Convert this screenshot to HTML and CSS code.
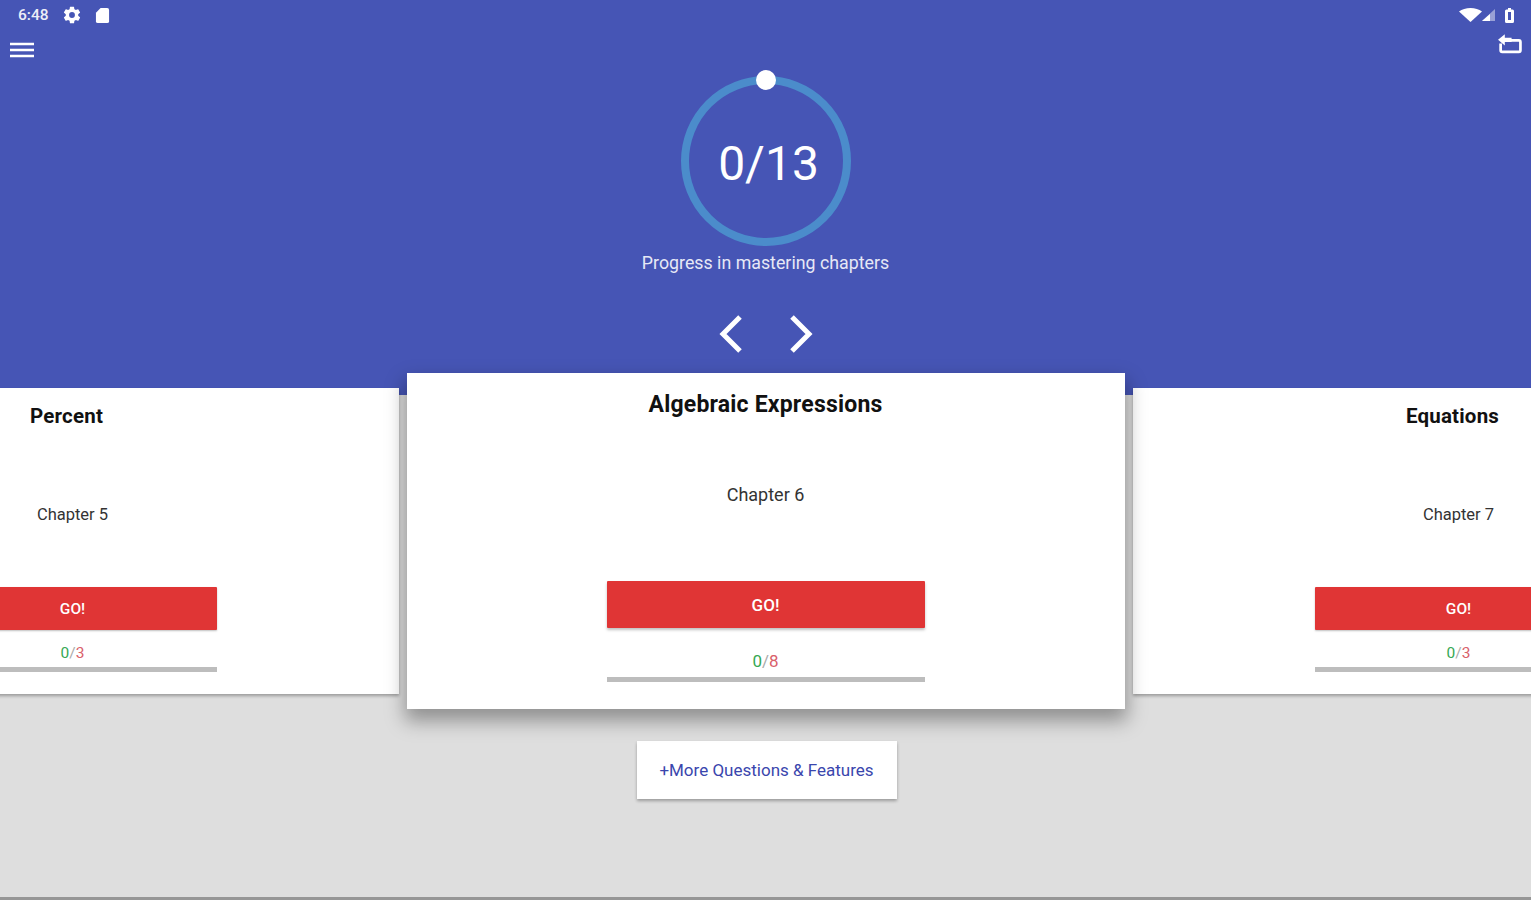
FILE: index.html
```html
<!DOCTYPE html>
<html lang="en">
<head>
<meta charset="UTF-8">
<title>Chapters</title>
<link rel="stylesheet" href="styles.css">
</head>
<body>

<header class="top">
    <div class="status-bar">
        <div class="status-left">
            <span class="clock">6:48</span>
            <svg viewBox="0 0 24 24" width="20" height="20"><path fill="#fff" d="M19.4 13c.04-.33.1-.66.1-1s-.06-.67-.1-1l2.1-1.65c.2-.15.25-.42.13-.64l-2-3.46c-.12-.22-.4-.3-.6-.22l-2.5 1c-.52-.4-1.08-.73-1.7-.98l-.37-2.65A.5.5 0 0 0 14 2h-4a.5.5 0 0 0-.5.42l-.37 2.65c-.62.25-1.18.58-1.7.98l-2.5-1c-.23-.08-.48 0-.6.22l-2 3.46c-.13.22-.07.49.13.64L4.56 11c-.04.33-.06.66-.06 1s.02.67.06 1l-2.1 1.65c-.2.15-.26.42-.13.64l2 3.46c.12.22.37.3.6.22l2.5-1c.52.4 1.08.73 1.7.98l.37 2.65c.04.24.25.42.5.42h4c.25 0 .46-.18.5-.42l.37-2.65c.62-.25 1.18-.58 1.7-.98l2.5 1c.22.08.48 0 .6-.22l2-3.46c.12-.22.07-.49-.13-.64L19.4 13zM12 15.5a3.5 3.5 0 1 1 0-7 3.5 3.5 0 0 1 0 7z"/></svg>
            <svg viewBox="0 0 16 18" width="15" height="17"><path fill="#fff" d="M6 1h7a2 2 0 0 1 2 2v12a2 2 0 0 1-2 2H3a2 2 0 0 1-2-2V6z"/></svg>
        </div>
        <div class="status-right">
            <svg viewBox="0 0 23 14" width="23" height="14"><path fill="#fff" d="M11.5 14 0 3.500C3 1.300 7 0 11.500 0S20 1.300 23 3.500z"/></svg>
            <svg viewBox="0 0 13 12" width="13" height="12"><path fill="#fff" opacity=".45" d="M13 0v12H0z"/><path fill="#fff" d="M8 5v7H0z"/></svg>
            <svg class="battery" viewBox="0 0 9 15" width="9" height="15"><path fill="#fff" fill-rule="evenodd" d="M3 0h3v1.500h1.500A1.500 1.500 0 0 1 9 3v10.500A1.500 1.500 0 0 1 7.500 15h-6A1.500 1.500 0 0 1 0 13.500V3a1.500 1.500 0 0 1 1.500-1.500H3zM3 4v8h3V4z"/></svg>
        </div>
    </div>
    <div class="toolbar">
        <svg class="menu-icon" viewBox="0 0 24 18" width="24" height="18"><path fill="none" stroke="#fff" stroke-width="2.400" d="M0 3h24M0 9h24M0 15h24"/></svg>
        <svg class="restore-icon" viewBox="0 0 24 20" width="25" height="21"><path fill="none" stroke="#fff" stroke-width="2.600" d="M6 7h15a1.500 1.500 0 0 1 1.500 1.500v8a1.500 1.500 0 0 1-1.500 1.500H5a1.500 1.500 0 0 1-1.500-1.500V10"/><path fill="#fff" d="M1 6.500 7.500 1v3.500H14v4H7.500V12z"/></svg>
    </div>
    <div class="progress">
        <div class="ring">
            <svg viewBox="0 0 170 170" width="170" height="170"><circle cx="85" cy="85" r="81" fill="none" stroke="#4b8ccb" stroke-width="8"/></svg>
            <span class="ring-dot"></span>
            <span class="ring-value">0/13</span>
        </div>
        <p class="progress-label">Progress in mastering chapters</p>
        <div class="arrows">
            <svg viewBox="0 0 26 38" width="26" height="38"><path fill="none" stroke="#fff" stroke-width="5" d="M22 2 5 19l17 17"/></svg>
            <svg viewBox="0 0 26 38" width="26" height="38"><path fill="none" stroke="#fff" stroke-width="5" d="m4 2 17 17L4 36"/></svg>
        </div>
    </div>
</header>

<main class="carousel">
    <section class="card side">
        <h2 class="card-title shift">Percent</h2>
        <p class="chapter">Chapter 5</p>
        <button class="go">GO!</button>
        <p class="score"><span class="done">0</span>/<span class="total">3</span></p>
        <div class="score-bar"></div>
    </section>
    <section class="card current">
        <h2 class="card-title">Algebraic Expressions</h2>
        <p class="chapter">Chapter 6</p>
        <button class="go">GO!</button>
        <p class="score"><span class="done">0</span>/<span class="total">8</span></p>
        <div class="score-bar"></div>
    </section>
    <section class="card side">
        <h2 class="card-title shift">Equations</h2>
        <p class="chapter">Chapter 7</p>
        <button class="go">GO!</button>
        <p class="score"><span class="done">0</span>/<span class="total">3</span></p>
        <div class="score-bar"></div>
    </section>
</main>

<div class="more-row">
    <button class="more">+More Questions &amp; Features</button>
</div>

</body>
</html>
```

FILE: styles.css
```css
html, body {
    margin: 0;
    padding: 0;
    height: 100%;
    overflow: hidden;
}

body {
    background-color: #dedede;
    font-family: Roboto, "Liberation Sans", sans-serif;
    box-shadow: inset 0 -3px 0 #969696;
}

/* blue header */
.top {
    height: 395px;
    background-color: #4655b5;
    color: #fff;
    display: flex;
    flex-direction: column;
}

.status-bar {
    height: 30px;
    display: flex;
    justify-content: space-between;
    align-items: center;
    padding: 0 17px 0 18px;
}

.status-left, .status-right {
    display: flex;
    align-items: center;
}

.status-left {
    gap: 13px;
}

.battery {
    margin-left: 10px;
}

.clock {
    font-size: 15.500px;
    font-weight: 500;
    opacity: 0.9;
}

.toolbar {
    height: 34px;
    display: flex;
    justify-content: space-between;
    align-items: flex-start;
    padding: 0 9px 0 10px;
}

.menu-icon {
    margin-top: 11px;
}

.restore-icon {
    margin-top: 3px;
}

.progress {
    margin-top: 12px;
    display: flex;
    flex-direction: column;
    align-items: center;
}

.ring {
    position: relative;
    width: 170px;
    height: 170px;
    display: flex;
    align-items: center;
    justify-content: center;
}

.ring svg {
    position: absolute;
    top: 0;
    left: 0;
}

.ring-dot {
    position: absolute;
    top: -6px;
    left: 75px;
    width: 20px;
    height: 20px;
    border-radius: 50%;
    background-color: #fff;
}

.ring-value {
    font-size: 48px;
    margin: 4px 0 0 6px;
}

.progress-label {
    margin: 5px 0 0;
    font-size: 17.800px;
    line-height: 24px;
    color: #e6e8f6;
}

.arrows {
    margin-top: 40px;
    display: flex;
    gap: 44px;
}

/* chapter cards */
.carousel {
    margin-top: -22px;
    display: flex;
    justify-content: center;
    align-items: flex-start;
    gap: 8px;
}

.card {
    flex-shrink: 0;
    position: relative;
    background-color: #fff;
    display: flex;
    flex-direction: column;
    align-items: center;
    box-sizing: border-box;
}

.current {
    width: 718px;
    height: 336px;
    box-shadow: 0 10px 18px 2px rgba(0,0,0,0.35);
    z-index: 2;
}

.side {
    width: 652px;
    height: 306px;
    margin-top: 15px;
    box-shadow: 0 2px 3px rgba(0,0,0,0.3);
}

.card-title {
    margin: 0;
    font-weight: 700;
    color: #111;
    letter-spacing: 0.2px;
}

.current .card-title {
    margin-top: 18px;
    font-size: 23px;
    line-height: 28px;
}

.side .card-title {
    margin-top: 15px;
    font-size: 20.500px;
    line-height: 26px;
}

.shift {
    margin-right: 12px;
}

.chapter {
    margin: 0;
    color: #333;
}

.current .chapter {
    margin-top: 65px;
    font-size: 18px;
    line-height: 22px;
}

.side .chapter {
    margin-top: 76px;
    font-size: 16.500px;
    line-height: 20px;
}

.go {
    border: none;
    border-radius: 1px;
    background-color: #e03535;
    color: #fff;
    font-family: inherit;
    font-weight: 500;
    padding: 0;
}

.current .go {
    margin-top: 75px;
    width: 318px;
    height: 47px;
    font-size: 17px;
    box-shadow: 0 2px 3px rgba(0,0,0,0.25);
}

.side .go {
    margin-top: 62px;
    width: 288px;
    height: 43px;
    font-size: 15.500px;
    box-shadow: 0 1px 2px rgba(0,0,0,0.25);
}

.score {
    margin: 0;
    color: #aaa;
}

.current .score {
    margin-top: 23px;
    font-size: 17px;
    line-height: 20px;
}

.side .score {
    margin-top: 14px;
    font-size: 15.500px;
    line-height: 19px;
}

.done {
    color: #35a853;
}

.total {
    color: #d9606a;
}

.score-bar {
    background-color: #bdbdbd;
}

.current .score-bar {
    margin-top: 6px;
    width: 318px;
    height: 5px;
}

.side .score-bar {
    margin-top: 4px;
    width: 288px;
    height: 5px;
}

/* bottom link */
.more-row {
    margin-top: 32px;
    display: flex;
    justify-content: center;
}

.more {
    width: 260px;
    height: 58px;
    margin-left: 2px;
    border: none;
    background-color: #fff;
    color: #3a46ad;
    font-family: inherit;
    font-size: 17px;
    padding: 0;
    box-shadow: 0 2px 3px rgba(0,0,0,0.3);
}
```
